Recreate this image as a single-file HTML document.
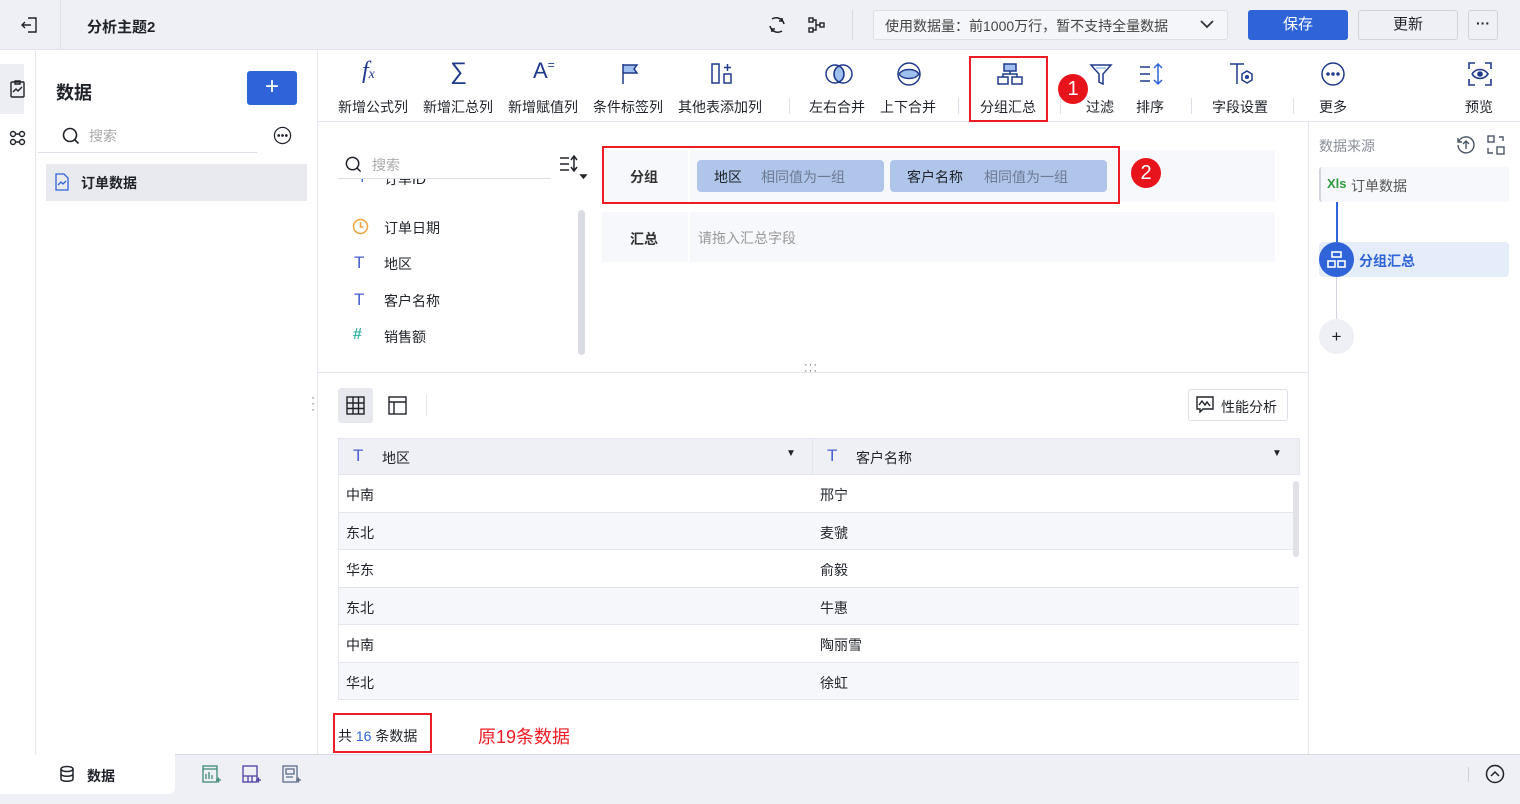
<!DOCTYPE html>
<html><head><meta charset="utf-8"><style>
*{box-sizing:border-box;margin:0;padding:0}
body{width:1520px;height:804px;overflow:hidden;background:#fff;font-family:"Liberation Sans","Noto Sans CJK SC",sans-serif;font-size:14px;color:#1f2329;position:relative}
.a{position:absolute}
.tb{font-size:14px;color:#1f2329;text-align:center;white-space:nowrap}
svg{display:block}
.row{position:absolute;left:339px;width:960px;height:37.5px;border-bottom:1px solid #e3e6ec;font-size:14px}
.row span{position:absolute;top:10px}
</style></head><body>
<!-- top bar -->
<div class="a" style="left:0;top:0;width:1520px;height:50px;background:#eef0f5;border-bottom:1px solid #dfe2e8"></div>
<div class="a" style="left:60px;top:0;width:1px;height:50px;background:#dfe2e8"></div>
<svg class="a" style="left:20px;top:15px" width="20" height="20" viewBox="0 0 20 20" fill="none" stroke="#1f2329" stroke-width="1.4"><path d="M8 3h8v14H8M2 10h9M5 7l-3 3 3 3"/></svg>
<div class="a" style="left:87px;top:16px;font-size:15px;font-weight:bold">分析主题2</div>
<svg class="a" style="left:766px;top:14px" width="22" height="22" viewBox="0 0 22 22" fill="none" stroke="#1f2329" stroke-width="1.6"><path d="M6 5a8 8 0 0 1 12 5M16 17a8 8 0 0 1-12-5"/><path d="M16 4v3h-3M6 18v-3h3"/></svg>
<svg class="a" style="left:807px;top:15px" width="20" height="20" viewBox="0 0 20 20" fill="none" stroke="#1f2329" stroke-width="1.4"><rect x="2" y="3" width="4" height="4"/><rect x="2" y="13" width="4" height="4"/><rect x="13" y="8" width="4" height="4"/><path d="M6 5h3v10H6M9 10h4"/></svg>
<div class="a" style="left:852px;top:10px;width:1px;height:30px;background:#d5d9e0"></div>
<div class="a" style="left:873px;top:10px;width:355px;height:30px;background:#f5f6f9;border:1px solid #dcdfe6;border-radius:3px;font-size:14px;color:#444;padding:5px 0 0 11px">使用数据量：前1000万行，暂不支持全量数据</div>
<svg class="a" style="left:1200px;top:18px" width="14" height="12" viewBox="0 0 14 12" fill="none" stroke="#333" stroke-width="1.8"><path d="M1 3l6 6 6-6"/></svg>
<div class="a" style="left:1248px;top:10px;width:100px;height:30px;background:#2f63d8;border-radius:3px;color:#fff;text-align:center;line-height:30px;font-size:15px">保存</div>
<div class="a" style="left:1358px;top:10px;width:100px;height:30px;background:#eef0f5;border:1px solid #cfd3db;border-radius:3px;text-align:center;line-height:28px;font-size:15px">更新</div>
<div class="a" style="left:1468px;top:10px;width:30px;height:30px;border:1px solid #cfd3db;border-radius:3px;text-align:center;line-height:24px;font-weight:bold">···</div>

<!-- left rail -->
<div class="a" style="left:35px;top:51px;width:1px;height:703px;background:#e3e6ec"></div>
<div class="a" style="left:0;top:64px;width:24px;height:50px;background:#eceef3"></div>
<svg class="a" style="left:8px;top:79px" width="20" height="20" viewBox="0 0 20 20" fill="none" stroke="#1f2329" stroke-width="1.4"><rect x="3" y="3" width="13" height="15" rx="1"/><path d="M7 2h5v3H7zM5 13l3-3 2 2 4-4"/></svg>
<svg class="a" style="left:8px;top:128px" width="20" height="20" viewBox="0 0 20 20" fill="none" stroke="#1f2329" stroke-width="1.4"><circle cx="5" cy="6" r="2.5"/><circle cx="14" cy="6" r="2.5"/><circle cx="5" cy="14" r="2.5"/><circle cx="14" cy="14" r="2.5"/><path d="M7.5 6h4M7.5 14h4"/></svg>

<!-- left panel -->
<div class="a" style="left:56px;top:79px;font-size:18px;font-weight:bold">数据</div>
<div class="a" style="left:247px;top:71px;width:50px;height:34px;background:#2f63d8;border-radius:3px;color:#fff;text-align:center;line-height:32px;font-size:24px">+</div>
<svg class="a" style="left:61px;top:126px" width="20" height="20" viewBox="0 0 20 20" fill="none" stroke="#1f2329" stroke-width="1.6"><circle cx="9" cy="9" r="6.5"/><path d="M13.5 13.5l4 4"/></svg>
<div class="a" style="left:89px;top:126px;color:#aaa">搜索</div>
<div class="a" style="left:38px;top:152px;width:219px;height:1px;background:#dcdfe6"></div>
<svg class="a" style="left:273px;top:126px" width="19" height="19" viewBox="0 0 20 20" fill="none" stroke="#1f2329" stroke-width="1.3"><circle cx="10" cy="10" r="8.5"/><circle cx="6" cy="10" r=".8" fill="#1f2329"/><circle cx="10" cy="10" r=".8" fill="#1f2329"/><circle cx="14" cy="10" r=".8" fill="#1f2329"/></svg>
<div class="a" style="left:46px;top:164px;width:261px;height:37px;background:#e8eaf0"></div>
<svg class="a" style="left:54px;top:173px" width="16" height="18" viewBox="0 0 16 18" fill="none" stroke="#2f63d8" stroke-width="1.3"><path d="M2 1h8l4 4v12H2z"/><path d="M4 12l3-3 2 2 3-3"/></svg>
<div class="a" style="left:81px;top:173px;font-weight:bold">订单数据</div>
<div class="a" style="left:317px;top:51px;width:1px;height:703px;background:#e3e6ec"></div>
<div class="a" style="left:311px;top:394px;color:#666;font-size:12px;line-height:6px">·<br>·<br>·</div>

<!-- toolbar -->
<div class="a" style="left:318px;top:121px;width:1202px;height:1px;background:#e3e6ec"></div>
<div class="a tb" style="left:362px;top:58px;font-size:24px;font-style:italic;font-family:'Liberation Serif',serif;color:#1f3a8a">f<span style="font-size:14px">x</span></div>
<div class="a tb" style="left:450px;top:58px;font-size:24px;color:#1f3a8a">∑</div>
<div class="a tb" style="left:533px;top:58px;font-size:22px;color:#1f3a8a">A<span style="font-size:12px;vertical-align:top">=</span></div>
<svg class="a" style="left:620px;top:62px" width="22" height="24" viewBox="0 0 22 24" fill="none" stroke="#1f3a8a" stroke-width="1.5"><path d="M3 2v20M3 3h14l-3 4 3 4H3" fill="#9fc0ee"/></svg>
<svg class="a" style="left:710px;top:62px" width="26" height="24" viewBox="0 0 26 24" fill="none" stroke="#1f3a8a" stroke-width="1.5"><rect x="2" y="2" width="7" height="19"/><rect x="14" y="12" width="7" height="9"/><path d="M17.5 2v7M14 5.5h7"/></svg>
<div class="a tb" style="left:338px;top:97px">新增公式列</div>
<div class="a tb" style="left:423px;top:97px">新增汇总列</div>
<div class="a tb" style="left:508px;top:97px">新增赋值列</div>
<div class="a tb" style="left:593px;top:97px">条件标签列</div>
<div class="a tb" style="left:678px;top:97px">其他表添加列</div>
<div class="a" style="left:789px;top:98px;width:1px;height:16px;background:#dcdfe6"></div>
<svg class="a" style="left:824px;top:61px" width="30" height="26" viewBox="0 0 30 26" fill="none" stroke="#1f3a8a" stroke-width="1.5"><circle cx="11" cy="13" r="9"/><circle cx="19" cy="13" r="9"/><path d="M15 5a9 9 0 0 1 0 16a9 9 0 0 1 0-16" fill="#9fc0ee"/></svg>
<svg class="a" style="left:896px;top:60px" width="26" height="28" viewBox="0 0 26 28" fill="none" stroke="#1f3a8a" stroke-width="1.5"><circle cx="13" cy="14" r="11"/><path d="M3 14c4-6 16-6 20 0c-4 6-16 6-20 0" fill="#9fc0ee"/></svg>
<div class="a tb" style="left:809px;top:97px">左右合并</div>
<div class="a tb" style="left:880px;top:97px">上下合并</div>
<div class="a" style="left:958px;top:98px;width:1px;height:16px;background:#dcdfe6"></div>
<svg class="a" style="left:996px;top:62px" width="28" height="24" viewBox="0 0 28 24" fill="none" stroke="#1f3a8a" stroke-width="1.5"><rect x="8" y="2" width="12" height="7" fill="#9fc0ee"/><rect x="2" y="15" width="10" height="7"/><rect x="16" y="15" width="10" height="7"/><path d="M14 9v3M7 15v-3h14v3"/></svg>
<div class="a tb" style="left:980px;top:97px">分组汇总</div>
<div class="a" style="left:969px;top:56px;width:79px;height:66px;border:2px solid #ee1c25"></div>
<div class="a" style="left:1058px;top:74px;width:30px;height:30px;border-radius:50%;background:#e8141c;color:#fff;font-size:20px;text-align:center;line-height:30px">1</div>
<div class="a" style="left:1060px;top:98px;width:1px;height:16px;background:#dcdfe6"></div>
<svg class="a" style="left:1089px;top:62px" width="24" height="24" viewBox="0 0 24 24" fill="none" stroke="#1f3a8a" stroke-width="1.5"><path d="M2 3h20l-8 9v10l-4-2v-8z"/><path d="M7 6h10" stroke="#9fc0ee"/></svg>
<svg class="a" style="left:1138px;top:62px" width="26" height="24" viewBox="0 0 26 24" fill="none" stroke="#1f3a8a" stroke-width="1.5"><path d="M2 5h10M2 12h10M2 19h10"/><path d="M20 2v20M16 6l4-4 4 4M16 18l4 4 4-4" stroke="#2f63d8"/></svg>
<div class="a tb" style="left:1086px;top:97px">过滤</div>
<div class="a tb" style="left:1136px;top:97px">排序</div>
<div class="a" style="left:1191px;top:98px;width:1px;height:16px;background:#dcdfe6"></div>
<svg class="a" style="left:1228px;top:61px" width="28" height="26" viewBox="0 0 28 26" fill="none" stroke="#1f3a8a" stroke-width="1.5"><path d="M2 3h14M9 3v20"/><path d="M19 10l5 3v6l-5 3-5-3v-6z"/><circle cx="19" cy="16" r="1.3" fill="#2f63d8"/></svg>
<div class="a tb" style="left:1212px;top:97px">字段设置</div>
<div class="a" style="left:1293px;top:98px;width:1px;height:16px;background:#dcdfe6"></div>
<svg class="a" style="left:1320px;top:61px" width="26" height="26" viewBox="0 0 26 26" fill="none" stroke="#1f3a8a" stroke-width="1.5"><circle cx="13" cy="13" r="11"/><circle cx="8" cy="13" r="1" fill="#1f3a8a"/><circle cx="13" cy="13" r="1" fill="#1f3a8a"/><circle cx="18" cy="13" r="1" fill="#1f3a8a"/></svg>
<div class="a tb" style="left:1319px;top:97px">更多</div>
<svg class="a" style="left:1467px;top:61px" width="26" height="26" viewBox="0 0 26 26" fill="none" stroke="#1f3a8a" stroke-width="1.6"><path d="M2 8V2h6M18 2h6v6M24 18v6h-6M8 24H2v-6"/><path d="M5 13c4-6 12-6 16 0c-4 6-12 6-16 0"/><circle cx="13" cy="13" r="2" fill="#1f3a8a"/></svg>
<div class="a tb" style="left:1465px;top:97px">预览</div>

<!-- field list -->
<svg class="a" style="left:344px;top:155px" width="19" height="19" viewBox="0 0 20 20" fill="none" stroke="#1f2329" stroke-width="1.6"><circle cx="9" cy="9" r="6.5"/><path d="M13.5 13.5l4 4"/></svg>
<div class="a" style="left:372px;top:155px;color:#aaa">搜索</div>
<div class="a" style="left:338px;top:178px;width:213px;height:1px;background:#dcdfe6"></div>
<svg class="a" style="left:559px;top:155px" width="30" height="26" viewBox="0 0 30 26" fill="none" stroke="#1f2329" stroke-width="1.5"><path d="M1 3h9M1 9h9M1 15h9M15 1v15M12 5l3-4 3 4M12 12l3 4 3-4"/><path d="M22 20h5l-2.5 3z" fill="#1f2329"/></svg>
<div class="a" style="left:338px;top:179px;width:240px;height:18px;overflow:hidden"><div style="position:absolute;left:20px;top:-10px;color:#2f63d8">T</div><div style="position:absolute;left:46px;top:-10px">订单ID</div></div>
<svg class="a" style="left:352px;top:218px" width="17" height="17" viewBox="0 0 17 17" fill="none" stroke="#f0a640" stroke-width="1.5"><circle cx="8.5" cy="8.5" r="7"/><path d="M8.5 4v5h3"/></svg>
<div class="a" style="left:384px;top:218px">订单日期</div>
<div class="a" style="left:354px;top:253px;color:#4a5fd4;font-size:17px">T</div><div class="a" style="left:384px;top:254px">地区</div>
<div class="a" style="left:354px;top:290px;color:#4a5fd4;font-size:17px">T</div><div class="a" style="left:384px;top:291px">客户名称</div>
<div class="a" style="left:353px;top:326px;color:#3ab5a5;font-size:16px;font-weight:bold">#</div><div class="a" style="left:384px;top:327px">销售额</div>
<div class="a" style="left:578px;top:210px;width:7px;height:145px;background:#d9dce2;border-radius:4px"></div>

<!-- group config -->
<div class="a" style="left:602px;top:150px;width:673px;height:52px;background:#f7f8fb"></div>
<div class="a" style="left:688px;top:150px;width:2px;height:52px;background:#fff"></div>
<div class="a" style="left:630px;top:167px;font-weight:bold;color:#333">分组</div>
<div class="a" style="left:697px;top:160px;width:187px;height:32px;background:#afc6ea;border-radius:4px"></div>
<div class="a" style="left:714px;top:167px;color:#1f2329">地区</div><div class="a" style="left:761px;top:167px;color:#6c7a94">相同值为一组</div>
<div class="a" style="left:890px;top:160px;width:217px;height:32px;background:#afc6ea;border-radius:4px"></div>
<div class="a" style="left:907px;top:167px;color:#1f2329">客户名称</div><div class="a" style="left:984px;top:167px;color:#6c7a94">相同值为一组</div>
<div class="a" style="left:602px;top:146px;width:518px;height:58px;border:2px solid #ee1c25"></div>
<div class="a" style="left:1131px;top:158px;width:30px;height:30px;border-radius:50%;background:#e8141c;color:#fff;font-size:20px;text-align:center;line-height:30px">2</div>
<div class="a" style="left:602px;top:212px;width:673px;height:50px;background:#f7f8fb"></div>
<div class="a" style="left:688px;top:212px;width:2px;height:50px;background:#fff"></div>
<div class="a" style="left:630px;top:229px;font-weight:bold;color:#333">汇总</div>
<div class="a" style="left:698px;top:228px;color:#999">请拖入汇总字段</div>

<!-- divider -->
<div class="a" style="left:318px;top:372px;width:990px;height:1px;background:#e3e6ec"></div>
<div class="a" style="left:804px;top:362px;color:#555;font-size:11px;letter-spacing:1px;line-height:6px">···<br>···</div>

<!-- view tabs -->
<div class="a" style="left:338px;top:388px;width:35px;height:35px;background:#e6e8ed;border-radius:3px"></div>
<svg class="a" style="left:346px;top:396px" width="19" height="19" viewBox="0 0 19 19" fill="none" stroke="#1f2329" stroke-width="1.4"><rect x="1" y="1" width="17" height="17"/><path d="M1 7h17M1 12.5h17M7 1v17M12.5 1v17"/></svg>
<svg class="a" style="left:388px;top:396px" width="19" height="19" viewBox="0 0 19 19" fill="none" stroke="#1f2329" stroke-width="1.4"><rect x="1" y="1" width="17" height="17"/><path d="M1 6h17M6 6v12"/></svg>
<div class="a" style="left:426px;top:394px;width:1px;height:22px;background:#e8eaee"></div>
<div class="a" style="left:1188px;top:389px;width:100px;height:32px;border:1px solid #dcdfe6;border-radius:3px"></div>
<svg class="a" style="left:1196px;top:396px" width="18" height="17" viewBox="0 0 18 17" fill="none" stroke="#1f2329" stroke-width="1.4"><path d="M1 1h16v12H7l-3 3v-3H1z"/><path d="M3 9l3-4 3 4 2-3 3 4"/></svg>
<div class="a" style="left:1221px;top:397px">性能分析</div>

<!-- table -->
<div class="a" style="left:338px;top:438px;width:962px;height:37px;background:#eef0f5;border:1px solid #e3e6ec"></div>
<div class="a" style="left:812px;top:438px;width:1px;height:262px;background:#e3e6ec"></div>
<div class="a" style="left:338px;top:475px;width:1px;height:225px;background:#e3e6ec"></div>
<div class="a" style="left:353px;top:446px;color:#4a5fd4;font-size:17px">T</div><div class="a" style="left:382px;top:448px">地区</div>
<div class="a" style="left:786px;top:448px;font-size:10px">▼</div>
<div class="a" style="left:827px;top:446px;color:#4a5fd4;font-size:17px">T</div><div class="a" style="left:856px;top:448px">客户名称</div>
<div class="a" style="left:1272px;top:448px;font-size:10px">▼</div>
<div class="row" style="top:475px;background:#fff"><span style="left:7px">中南</span><span style="left:481px">邢宁</span></div>
<div class="row" style="top:512.5px;background:#f6f7fa"><span style="left:7px">东北</span><span style="left:481px">麦虢</span></div>
<div class="row" style="top:550px;background:#fff"><span style="left:7px">华东</span><span style="left:481px">俞毅</span></div>
<div class="row" style="top:587.5px;background:#f6f7fa"><span style="left:7px">东北</span><span style="left:481px">牛惠</span></div>
<div class="row" style="top:625px;background:#fff"><span style="left:7px">中南</span><span style="left:481px">陶丽雪</span></div>
<div class="row" style="top:662.5px;background:#f6f7fa"><span style="left:7px">华北</span><span style="left:481px">徐虹</span></div>
<div class="a" style="left:1293px;top:481px;width:6px;height:76px;background:#e0e2e7;border-radius:3px"></div>
<div class="a" style="left:333px;top:713px;width:99px;height:40px;border:2px solid #ee1c25"></div>
<div class="a" style="left:338px;top:726px">共 <span style="color:#2f63d8">16</span> 条数据</div>
<div class="a" style="left:478px;top:723px;color:#ee1c25;font-size:18px">原19条数据</div>

<!-- right panel -->
<div class="a" style="left:1308px;top:122px;width:1px;height:632px;background:#e3e6ec"></div>
<div class="a" style="left:1319px;top:136px;color:#8a9099">数据来源</div>
<svg class="a" style="left:1456px;top:135px" width="20" height="20" viewBox="0 0 20 20" fill="none" stroke="#4a5566" stroke-width="1.4"><path d="M3 6a8 8 0 1 1-1 4M2 3v4h4M10 14V6M7 9l3-3 3 3"/></svg>
<svg class="a" style="left:1487px;top:135px" width="18" height="20" viewBox="0 0 18 20" fill="none" stroke="#4a5566" stroke-width="1.4"><rect x="1" y="1" width="6" height="6"/><rect x="10" y="12" width="7" height="7"/><path d="M12 2h4v4M1 13v5h5"/></svg>
<div class="a" style="left:1319px;top:167px;width:190px;height:35px;background:#f7f8fb;border-left:2px solid #d0d4dc;border-radius:3px"></div>
<div class="a" style="left:1327px;top:176px;color:#2f9a3f;font-size:13px;font-weight:bold">Xls</div>
<div class="a" style="left:1351px;top:176px;color:#555">订单数据</div>
<div class="a" style="left:1336px;top:202px;width:1.5px;height:42px;background:#2f63d8"></div>
<div class="a" style="left:1319px;top:242px;width:190px;height:35px;background:#e5edfb;border-radius:4px"></div>
<div class="a" style="left:1319px;top:242px;width:35px;height:35px;background:#2f63d8;border-radius:50%"></div>
<svg class="a" style="left:1327px;top:251px" width="19" height="17" viewBox="0 0 19 17" fill="none" stroke="#fff" stroke-width="1.6"><rect x="5" y="1" width="9" height="5"/><rect x="1" y="10" width="7" height="6"/><rect x="11" y="10" width="7" height="6"/></svg>
<div class="a" style="left:1359px;top:251px;color:#2f63d8;font-weight:bold">分组汇总</div>
<div class="a" style="left:1336px;top:277px;width:1px;height:42px;background:#d0d4dc"></div>
<div class="a" style="left:1319px;top:319px;width:35px;height:35px;background:#eef0f5;border-radius:50%;text-align:center;line-height:35px;font-size:17px">+</div>

<!-- bottom bar -->
<div class="a" style="left:0;top:754px;width:1520px;height:50px;background:#eef0f5;border-top:1px solid #d5d9e0"></div>
<div class="a" style="left:0;top:754px;width:175px;height:40px;background:#fff;border-radius:0 0 6px 0"></div>
<svg class="a" style="left:59px;top:765px" width="16" height="18" viewBox="0 0 16 18" fill="none" stroke="#1f2329" stroke-width="1.5"><ellipse cx="8" cy="4" rx="6" ry="2.5"/><path d="M2 4v10c0 3 12 3 12 0V4M2 9c0 3 12 3 12 0"/></svg>
<div class="a" style="left:87px;top:766px;font-weight:bold">数据</div>
<svg class="a" style="left:202px;top:765px" width="20" height="20" viewBox="0 0 20 20" fill="none" stroke="#3c8a78" stroke-width="1.3"><rect x="1" y="1" width="14" height="16"/><path d="M1 4h14M4 14V9M7 14V7M10 14V10M14 15h5M16.5 12.5v5"/></svg>
<svg class="a" style="left:242px;top:765px" width="20" height="20" viewBox="0 0 20 20" fill="none" stroke="#4a3fa0" stroke-width="1.3"><rect x="1" y="1" width="14" height="16"/><path d="M1 11h14M6 11v6M10 11v6M14 15h5M16.5 12.5v5"/></svg>
<svg class="a" style="left:282px;top:765px" width="20" height="20" viewBox="0 0 20 20" fill="none" stroke="#5b6b86" stroke-width="1.3"><rect x="1" y="1" width="14" height="16"/><rect x="4" y="4" width="8" height="5"/><path d="M4 12h7M14 15h5M16.5 12.5v5"/></svg>
<div class="a" style="left:1468px;top:767px;width:1px;height:15px;background:#ccd0d8"></div>
<svg class="a" style="left:1485px;top:764px" width="20" height="20" viewBox="0 0 20 20" fill="none" stroke="#1f2329" stroke-width="1.5"><circle cx="10" cy="10" r="8.5"/><path d="M6 12l4-4 4 4"/></svg>
</body></html>
